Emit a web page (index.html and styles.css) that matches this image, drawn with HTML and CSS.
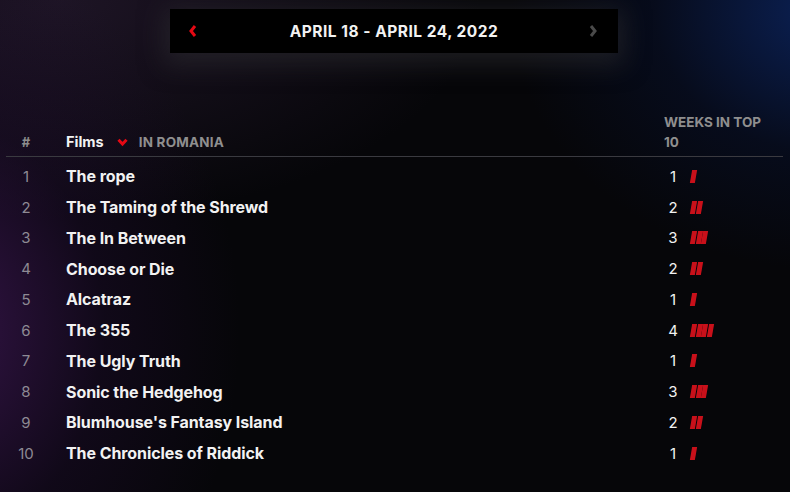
FILE: index.html
```html
<!DOCTYPE html>
<html>
<head>
<meta charset="utf-8">
<link rel="stylesheet" href="styles.css">
</head>
<body>
<div class="page">
  <div class="datebar">
    <span class="arrow prev"><svg width="10" height="14" viewBox="0 0 10 14"><path d="M7 2 L3 7 L7 12" fill="none" stroke="#e50914" stroke-width="3"/></svg></span>
    <span class="date">APRIL 18 - APRIL 24, 2022</span>
    <span class="arrow next"><svg width="10" height="14" viewBox="0 0 10 14"><path d="M3 2 L7 7 L3 12" fill="none" stroke="#4a4a4a" stroke-width="3"/></svg></span>
  </div>

  <div class="table">
    <div class="head">
      <span class="rank">#</span>
      <span class="cat">Films <svg class="chev" width="11" height="9" viewBox="0 0 11 9"><path d="M1.5 1.8 L5.5 6 L9.5 1.8" fill="none" stroke="#e50914" stroke-width="3"/></svg> <span class="country">IN ROMANIA</span></span>
      <span class="weeks-h">WEEKS IN TOP 10</span>
    </div>
    <div class="row"><span class="rank">1</span><span class="title">The rope</span><span class="wk"><span class="num">1</span><span class="bars"><i></i></span></span></div>
    <div class="row"><span class="rank">2</span><span class="title">The Taming of the Shrewd</span><span class="wk"><span class="num">2</span><span class="bars"><i></i><i></i></span></span></div>
    <div class="row"><span class="rank">3</span><span class="title">The In Between</span><span class="wk"><span class="num">3</span><span class="bars"><i></i><i></i><i></i></span></span></div>
    <div class="row"><span class="rank">4</span><span class="title">Choose or Die</span><span class="wk"><span class="num">2</span><span class="bars"><i></i><i></i></span></span></div>
    <div class="row"><span class="rank">5</span><span class="title">Alcatraz</span><span class="wk"><span class="num">1</span><span class="bars"><i></i></span></span></div>
    <div class="row"><span class="rank">6</span><span class="title">The 355</span><span class="wk"><span class="num">4</span><span class="bars"><i></i><i></i><i></i><i></i></span></span></div>
    <div class="row"><span class="rank">7</span><span class="title">The Ugly Truth</span><span class="wk"><span class="num">1</span><span class="bars"><i></i></span></span></div>
    <div class="row"><span class="rank">8</span><span class="title">Sonic the Hedgehog</span><span class="wk"><span class="num">3</span><span class="bars"><i></i><i></i><i></i></span></span></div>
    <div class="row"><span class="rank">9</span><span class="title">Blumhouse's Fantasy Island</span><span class="wk"><span class="num">2</span><span class="bars"><i></i><i></i></span></span></div>
    <div class="row"><span class="rank">10</span><span class="title">The Chronicles of Riddick</span><span class="wk"><span class="num">1</span><span class="bars"><i></i></span></span></div>
  </div>
</div>
</body>
</html>
```

FILE: styles.css
```css
html, body {
  margin: 0;
  padding: 0;
  width: 790px;
  height: 492px;
  overflow: hidden;
}
body {
  background:
    radial-gradient(ellipse 300px 380px at -60px 330px, rgba(72, 26, 98, 0.7), rgba(40, 15, 60, 0.3) 55%, rgba(0,0,0,0) 100%),
    radial-gradient(ellipse 320px 260px at 830px 10px, rgba(12, 38, 100, 0.85), rgba(8, 20, 55, 0.4) 55%, rgba(0,0,0,0) 100%),
    radial-gradient(ellipse 420px 220px at 60px 0px, rgba(42, 28, 52, 0.65), rgba(0,0,0,0) 100%),
    #060609;
  font-family: Inter, "Liberation Sans", sans-serif;
  color: #fff;
}
.page {
  display: flex;
  flex-direction: column;
  align-items: stretch;
  padding-top: 9px;
}
.datebar {
  align-self: flex-start;
  margin-left: 170px;
  width: 448px;
  height: 44px;
  box-sizing: border-box;
  background: #000;
  box-shadow: 0 6px 24px 6px rgba(45, 45, 50, 0.55);
  display: flex;
  align-items: center;
  justify-content: space-between;
  padding: 0 18px 0 18px;
}
.arrow { display: flex; align-items: center; width: 12px; }
.date {
  font-weight: 700;
  font-size: 15.5px;
  letter-spacing: 0.5px;
  color: #f2f2f2;
}
.table {
  margin: 59px 7px 0 6px;
}
.head {
  display: grid;
  grid-template-columns: 40px 1fr 119px;
  column-gap: 20px;
  align-items: end;
  border-bottom: 1.5px solid #3a3a40;
  padding-bottom: 4px;
}
.head .rank {
  font-size: 13px;
  font-weight: 700;
  color: #8c8c8c;
  line-height: 20px;
}
.cat {
  font-size: 14.5px;
  font-weight: 700;
  color: #f2f2f2;
  line-height: 20px;
  display: flex;
  align-items: center;
}
.chev { margin: 1px 11px 0 13px; }
.country {
  font-size: 13.5px;
  font-weight: 700;
  color: #8f8f8f;
  letter-spacing: 0.2px;
}
.weeks-h {
  font-size: 13.5px;
  font-weight: 700;
  color: #8f8f8f;
  line-height: 20px;
  width: 110px;
}
.row {
  display: grid;
  grid-template-columns: 40px 1fr 119px;
  column-gap: 20px;
  align-items: center;
  height: 30.75px;
}
.head + .row { margin-top: 4px; }
.rank {
  text-align: center;
  font-size: 15px;
  color: #8e8a94;
}
.title {
  font-size: 16px;
  font-weight: 700;
  color: #f2f2f2;
  letter-spacing: -0.08px;
}
.wk {
  display: flex;
  align-items: center;
}
.num {
  width: 18px;
  text-align: center;
  font-size: 15px;
  color: #f2f2f2;
}
.bars {
  display: flex;
  gap: 1px;
  margin-left: 9px;
}
.bars i {
  display: block;
  width: 4.6px;
  height: 13px;
  background: #c8101a;
  transform: skewX(-10deg);
}
```
